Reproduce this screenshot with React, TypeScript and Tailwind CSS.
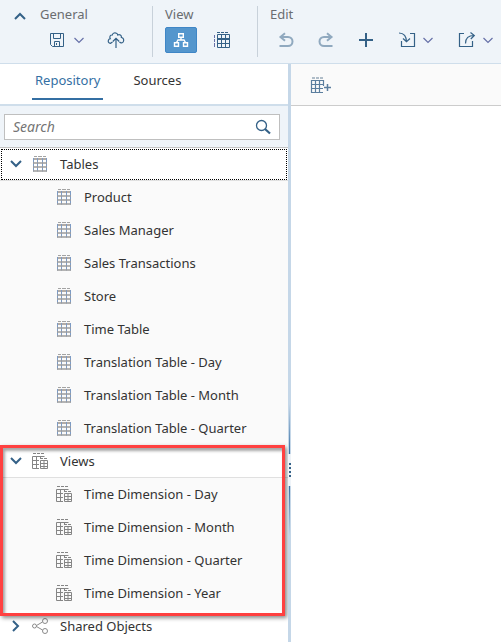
import { useState, type ReactNode } from "react";

type IconProps = { className?: string };

function Chevron({ className, d = "M1 3l5 5 5-5" }: IconProps & { d?: string }) {
  return (
    <svg viewBox="0 0 12 12" className={className} fill="none" stroke="currentColor" strokeWidth="2" aria-hidden="true">
      <path d={d} />
    </svg>
  );
}

function CaretIcon() {
  return (
    <svg viewBox="0 0 12 12" className="size-3" fill="none" stroke="#6670a8" strokeWidth="1.2" aria-hidden="true">
      <path d="M1.500 4L6 8.500 10.500 4" />
    </svg>
  );
}

function SaveIcon() {
  return (
    <svg viewBox="0 0 16 16" className="size-4" fill="none" stroke="currentColor" aria-hidden="true">
      <path d="M1.500 1.500h13v13h-11l-2-2z" />
      <path d="M4.500 1.500v5h7v-5M5.500 14.500v-5h5v5M7.500 11v2" />
    </svg>
  );
}

function CloudUploadIcon() {
  return (
    <svg viewBox="0 0 18 18" className="size-[18px]" fill="none" stroke="currentColor" strokeWidth="1.2" aria-hidden="true">
      <path d="M5.500 11l-2 1.300C1.500 12.300.800 10.500 1.500 9 2 8 3 7.700 3.300 7.700 2 5.500 3.500 3.800 5.200 4 5.800 2 8 1.300 9.500 2.300c.8.500 1.200 1.200 1.300 1.700 1.700-1 4 .3 3.600 2.500 2.100.3 2.800 2.500 1.900 4.200-.8 1.400-2.500 1.800-3.800.3" />
      <path d="M9 17V7.500M5.800 10.500L9 7.300l3.200 3.200" />
    </svg>
  );
}

function HierarchyIcon() {
  return (
    <svg viewBox="0 0 16 16" className="size-4" fill="none" stroke="currentColor" strokeWidth="1.400" aria-hidden="true">
      <path d="M5.700 1.700h4.600v3.600H5.700zM1.500 10.700h4v3.600h-4zM10.500 10.700h4v3.600h-4zM8 5.500v2.500M3.500 10.500l1.500-2.500h6l1.500 2.500" />
    </svg>
  );
}

function ColumnsIcon() {
  return (
    <svg viewBox="0 0 18 18" className="size-[18px]" fill="none" stroke="currentColor" aria-hidden="true">
      <path d="M4 1.500h3M8 1.500h3M12 1.500h3" />
      <path d="M1.500 4v3M1.500 8v3M1.500 12v4" stroke="#6670a8" />
      <path d="M4.500 3.500h12v13h-12zM8.500 3.500v13M12.500 3.500v13M4.500 12.500h12" />
      <path d="M4 8h13" strokeWidth="2" />
    </svg>
  );
}

function UndoIcon({ className = "" }: IconProps) {
  return (
    <svg viewBox="0 0 16 16" className={`size-4 ${className}`} fill="none" stroke="currentColor" strokeWidth="2" aria-hidden="true">
      <path d="M7 1.300L2.500 5 7 8.700M2.500 5H10a4.500 4.500 0 0 1 0 9H1.500" />
    </svg>
  );
}

function PlusIcon() {
  return (
    <svg viewBox="0 0 16 16" className="size-4" stroke="currentColor" strokeWidth="2" aria-hidden="true">
      <path d="M8 1v14M1 8h14" />
    </svg>
  );
}

function ImportIcon() {
  return (
    <svg viewBox="0 0 18 18" className="size-[18px]" fill="none" stroke="currentColor" strokeWidth="1.200" aria-hidden="true">
      <path d="M12 2.500h4.500v13h-13V10" />
      <path d="M1 2c5 0 7.500 3.500 7.500 9M5 7.500l3.500 3.300L12 7.500" />
    </svg>
  );
}

function ExportIcon() {
  return (
    <svg viewBox="0 0 18 18" className="size-[18px]" fill="none" stroke="currentColor" strokeWidth="1.200" aria-hidden="true">
      <path d="M6 2.500H1.500v13h13V10" />
      <path d="M7.500 12.500c0-5.500 3-8 8.500-8M12.500 1.500l3.800 3-3.500 3.500" />
    </svg>
  );
}

function SearchIcon() {
  return (
    <svg viewBox="0 0 16 16" className="size-4" fill="none" stroke="currentColor" aria-hidden="true">
      <circle cx="6.500" cy="6.500" r="5" strokeWidth="1.300" />
      <path d="M10 10l5 4.500" strokeWidth="2.200" />
    </svg>
  );
}

function TableIcon() {
  return (
    <svg viewBox="0 0 14 16" className="h-4 w-3.5" fill="none" aria-hidden="true">
      <path d="M1 .5h3M5 .5h4M10 .5h3" stroke="#a3a3a3" />
      <path d="M0 3h14" stroke="#b3aca6" strokeWidth="2" />
      <path d="M.5 2v13.500M4.500 2v13.500M9.500 2v13.500M13.500 2v13.500" stroke="#7d9bc4" />
      <path d="M0 7h14M0 11h14M0 15h14" stroke="#9c9c9c" strokeWidth="1.300" />
    </svg>
  );
}

function ViewIcon() {
  return (
    <svg viewBox="0 0 16 16" className="size-4" fill="none" stroke="#858585" aria-hidden="true">
      <path d="M1 .5h3M5 .5h3M9 .5h3" />
      <path d="M7 15.500H.5v-12h12M.5 7.500H7M.5 11.500H7M4.500 3.500v12M8.500 3.500V6" />
      <path d="M9 5.500h2M12 5.500h3M8.500 7.500h7v8h-7zM12 7.500v8M8.500 10.500h7M8.500 13.500h7" />
    </svg>
  );
}

function ShareIcon() {
  return (
    <svg viewBox="0 0 16 16" className="size-4" fill="none" stroke="#8a8a8a" aria-hidden="true">
      <circle cx="2.500" cy="8" r="2" />
      <circle cx="13" cy="3" r="2.500" />
      <circle cx="13" cy="13" r="2.500" />
      <path d="M4.500 7.500l6-3.500M4.500 8.500l6 3.500" />
    </svg>
  );
}

function AddTableIcon() {
  return (
    <svg viewBox="0 0 22 16" className="h-4 w-[22px]" fill="none" stroke="#5b7e9e" aria-hidden="true">
      <path d="M2 1h3M6 1h3M10 1h3" stroke="#b0bdc8" strokeWidth="2" />
      <path d="M13.500 9V3.500h-12v12H13M5.500 3v13M9.500 3v13M1 7.500h12M1 11.500h12" strokeWidth="1.200" />
      <path d="M17.500 7v7M14 10.500h7" strokeWidth="1.500" />
    </svg>
  );
}

function ToolButton({ label, children, className = "" }: { label: string; children: ReactNode; className?: string }) {
  return (
    <button type="button" aria-label={label} className={`flex items-center justify-center text-[#346187] ${className}`}>
      {children}
    </button>
  );
}

const tables = [
  "Product",
  "Sales Manager",
  "Sales Transactions",
  "Store",
  "Time Table",
  "Translation Table - Day",
  "Translation Table - Month",
  "Translation Table - Quarter",
];

const views = ["Time Dimension - Day", "Time Dimension - Month", "Time Dimension - Quarter", "Time Dimension - Year"];

function GroupRow({ label, icon, open, onToggle }: { label: string; icon: ReactNode; open: boolean; onToggle: () => void }) {
  return (
    <button
      type="button"
      aria-expanded={open}
      onClick={onToggle}
      className="flex h-[33px] w-full items-center border-b border-[#e0e0e0] bg-white pl-2.5 text-left"
    >
      <Chevron className="size-3 text-[#346187]" d={open ? "M1 3l5 5 5-5" : "M3 1l5 5-5 5"} />
      <span className="ml-2.5 flex w-4 justify-center">{icon}</span>
      <span className="ml-3">{label}</span>
    </button>
  );
}

function Items({ names, icon }: { names: string[]; icon: ReactNode }) {
  return (
    <ul>
      {names.map((name) => (
        <li key={name} className="flex h-[33px] items-center bg-[#fafafa] pb-px pl-14">
          <span className="flex w-4 justify-center">{icon}</span>
          <span className="ml-3">{name}</span>
        </li>
      ))}
    </ul>
  );
}

export default function App() {
  const [tablesOpen, setTablesOpen] = useState(true);
  const [viewsOpen, setViewsOpen] = useState(true);
  const [sharedOpen, setSharedOpen] = useState(false);

  return (
    <div className="flex h-screen flex-col overflow-hidden bg-white font-['Noto_Sans',sans-serif] text-[13px] leading-5 text-[#333]">
      <header className="flex h-16 shrink-0 items-start overflow-hidden border-b border-[#cfdeeb] bg-[#eff4f9] pt-1.5 text-[#6a6d70]">
        <ToolButton label="Collapse toolbar" className="ml-3.5 h-5 w-3">
          <Chevron className="size-3" d="M1 9l5-5 5 5" />
        </ToolButton>
        <section className="ml-3.5 w-28 shrink-0">
          <h2 className="-mt-0.5 h-5">General</h2>
          <div className="mt-[3px] flex h-[26px] items-center pl-[9px]">
            <ToolButton label="Save"><SaveIcon /></ToolButton>
            <ToolButton label="Save options" className="ml-2"><CaretIcon /></ToolButton>
            <ToolButton label="Deploy" className="ml-[22px]"><CloudUploadIcon /></ToolButton>
          </div>
        </section>
        <section className="h-[51px] w-[106px] shrink-0 border-x border-[#c8d1da] pl-3">
          <h2 className="-mt-0.5 h-5">View</h2>
          <div className="mt-[3px] flex h-[26px] items-center">
            <ToolButton label="Diagram view" className="h-[26px] w-8 rounded-xs border border-[#3f86c6] bg-[#5496cd] text-white"><HierarchyIcon /></ToolButton>
            <ToolButton label="Data preview" className="ml-4"><ColumnsIcon /></ToolButton>
          </div>
        </section>
        <section className="shrink-0 pl-3">
          <h2 className="-mt-0.5 h-5">Edit</h2>
          <div className="mt-[3px] flex h-[26px] items-center pl-2">
            <ToolButton label="Undo" className="opacity-50"><UndoIcon /></ToolButton>
            <ToolButton label="Redo" className="ml-6 opacity-50"><UndoIcon className="-scale-x-100" /></ToolButton>
            <ToolButton label="Add" className="ml-6"><PlusIcon /></ToolButton>
            <ToolButton label="Import" className="ml-6"><ImportIcon /></ToolButton>
            <ToolButton label="Import options" className="ml-1.5"><CaretIcon /></ToolButton>
            <ToolButton label="Export" className="ml-6"><ExportIcon /></ToolButton>
            <ToolButton label="Export options" className="ml-1.5"><CaretIcon /></ToolButton>
          </div>
        </section>
      </header>

      <div className="flex min-h-0 flex-1">
        <aside className="flex w-72 shrink-0 flex-col">
          <nav role="tablist" className="flex h-[42px] shrink-0 gap-[27px] border-b-2 border-[#cfdeeb] pl-8">
            <button type="button" role="tab" aria-selected="true" className="h-9 border-b-2 border-[#346fa3] px-[3px] pb-0.5 text-[#346fa3]">
              Repository
            </button>
            <button type="button" role="tab" aria-selected="false" className="h-9 border-b-2 border-transparent px-[3px] pb-0.5">
              Sources
            </button>
          </nav>
          <div className="h-[42px] shrink-0 border-b border-[#c4c4c4] bg-[#eff4f9] py-2 pr-2 pl-1">
            <label className="flex h-[26px] items-center border border-[#bfbfbf] bg-white px-2">
              <input type="search" aria-label="Search" placeholder="Search" className="min-w-0 flex-1 text-sm italic outline-none placeholder:text-[#757575]" />
              <span className="text-[#346187]"><SearchIcon /></span>
            </label>
          </div>
          <div className="min-h-0 flex-1 overflow-hidden">
            <div className="relative">
              <GroupRow label="Tables" icon={<TableIcon />} open={tablesOpen} onToggle={() => setTablesOpen(!tablesOpen)} />
              <div className="pointer-events-none absolute inset-px border border-dotted border-black" />
            </div>
            {tablesOpen && <Items names={tables} icon={<TableIcon />} />}
            <div className="relative">
              <GroupRow label="Views" icon={<ViewIcon />} open={viewsOpen} onToggle={() => setViewsOpen(!viewsOpen)} />
              {viewsOpen && <Items names={views} icon={<ViewIcon />} />}
              <div className="pointer-events-none absolute top-0 right-[3px] -bottom-1.5 left-0 border-3 border-[#ff4141] shadow-[2px_2px_4px_rgba(0,0,0,0.45),inset_2px_3px_3px_rgba(0,0,0,0.35)]" />
            </div>
            <GroupRow label="Shared Objects" icon={<ShareIcon />} open={sharedOpen} onToggle={() => setSharedOpen(!sharedOpen)} />
          </div>
        </aside>

        <div role="separator" aria-orientation="vertical" className="flex w-[3px] shrink-0 flex-col items-center justify-center bg-[#c5d7e8] pt-[233px]">
          <span className="h-[50px] w-px shrink-0 bg-linear-to-t from-[#346fa3] to-[#c5d7e8]" />
          <span className="flex h-8 w-full shrink-0 flex-col items-center justify-center gap-0.5 bg-[#eff4f9]">
            <i className="size-0.5 bg-[#346187]" />
            <i className="size-0.5 bg-[#346187]" />
            <i className="size-0.5 bg-[#346187]" />
            <i className="size-0.5 bg-[#346187]" />
          </span>
          <span className="h-[50px] w-px shrink-0 bg-linear-to-b from-[#346fa3] to-[#c5d7e8]" />
        </div>

        <main className="min-w-0 flex-1 bg-white">
          <div className="flex h-[42px] items-center border-b border-[#ccc] bg-[#fafafa] pl-[19px]">
            <button type="button" aria-label="Add table"><AddTableIcon /></button>
          </div>
        </main>
      </div>
    </div>
  );
}
